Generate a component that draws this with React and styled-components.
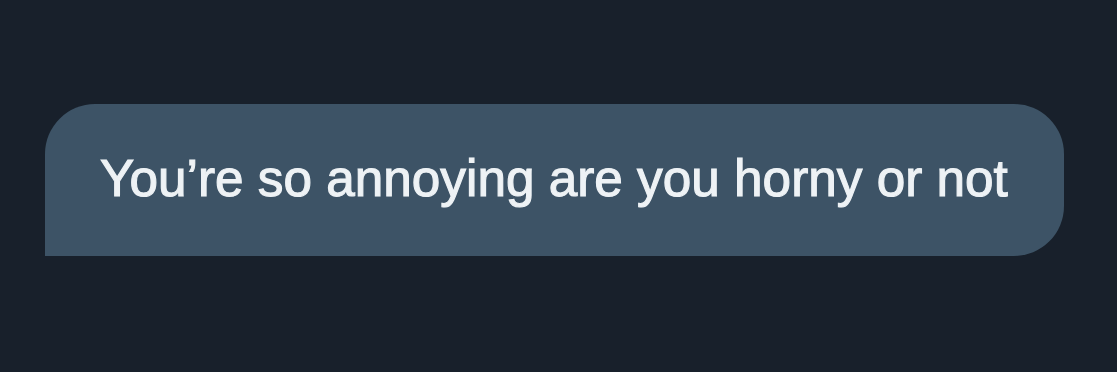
import React from "react";
import styled, { createGlobalStyle } from "styled-components";

const GlobalStyle = createGlobalStyle`
  html, body {
    margin: 0;
    padding: 0;
    background: #18202b;
  }
`;

const Screen = styled.div`
  width: 1117px;
  height: 372px;
  background: #18202b;
  box-sizing: border-box;
  padding: 104px 0 0 45px;
`;

const Bubble = styled.div`
  width: 1019px;
  height: 152px;
  box-sizing: border-box;
  background: #3d5366;
  border-radius: 50px 50px 50px 0;
  display: flex;
  align-items: center;
  padding: 0 0 4px 55px;
`;

const Text = styled.span`
  font-family: "Liberation Sans", Arial, sans-serif;
  font-size: 51.3px;
  color: #eef2f5;
  -webkit-text-stroke: 1.1px #eef2f5;
  white-space: nowrap;
`;

export default function App() {
  return (
    <>
      <GlobalStyle />
      <Screen>
        <Bubble>
          <Text>You’re so annoying are you horny or not</Text>
        </Bubble>
      </Screen>
    </>
  );
}
